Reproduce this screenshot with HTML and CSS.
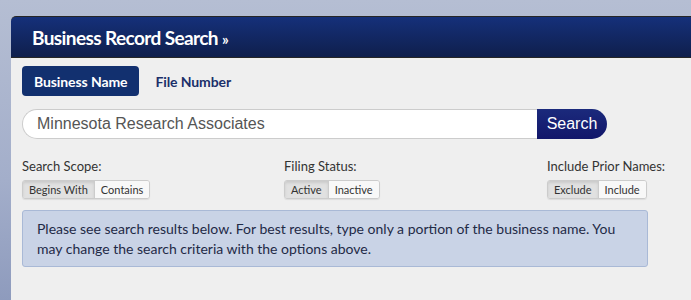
FILE: index.html
```html
<!DOCTYPE html>
<html lang="en">
<head>
  <meta charset="UTF-8">
  <title>Business Record Search</title>
  <link rel="stylesheet" href="styles.css">
</head>
<body>
  <div class="panel">
    <div class="panel-header">
      <h1 class="panel-title">Business Record Search <span class="raquo">&raquo;</span></h1>
    </div>
    <div class="panel-body">
      <div class="tabs">
        <a class="tab active">Business Name</a>
        <a class="tab">File Number</a>
      </div>

      <div class="search-row">
        <input class="search-input" type="text" value="Minnesota Research Associates">
        <button class="search-btn">Search</button>
      </div>

      <div class="options">
        <div class="option">
          <div class="option-label">Search Scope:</div>
          <div class="btn-group">
            <span class="toggle on">Begins With</span><span class="toggle">Contains</span>
          </div>
        </div>
        <div class="option">
          <div class="option-label">Filing Status:</div>
          <div class="btn-group">
            <span class="toggle on">Active</span><span class="toggle">Inactive</span>
          </div>
        </div>
        <div class="option">
          <div class="option-label">Include Prior Names:</div>
          <div class="btn-group">
            <span class="toggle on">Exclude</span><span class="toggle">Include</span>
          </div>
        </div>
      </div>

      <div class="alert">
        Please see search results below. For best results, type only a portion of the business name. You may change the search criteria with the options above.
      </div>
    </div>
  </div>
</body>
</html>
```

FILE: styles.css
```css
* {
  margin: 0;
  padding: 0;
  box-sizing: border-box;
}

body {
  font-family: 'Lato', 'Liberation Sans', sans-serif;
  background: linear-gradient(180deg, #b5bed3 0%, #a3aeca 60%, #8e9bbd 100%);
  height: 300px;
  overflow: hidden;
  padding: 16px 0 0 11px;
}

.panel {
  width: 680px;
  height: 284px;
  background: #efefef;
  border-top-left-radius: 5px;
}

.panel-header {
  background: linear-gradient(180deg, #15307a 0%, #0f1f4c 100%);
  border-top: 1px solid #262626;
  border-bottom: 1px solid #262626;
  border-top-left-radius: 5px;
  height: 42px;
  padding: 0 21px;
  display: flex;
  align-items: center;
}

.panel-title {
  color: #ffffff;
  font-size: 19px;
  font-weight: 700;
  letter-spacing: -0.6px;
  padding-top: 1px;
}

.raquo {
  font-size: 15px;
}

.panel-body {
  padding: 8px 11px;
}

.tabs {
  display: flex;
  align-items: center;
  gap: 16px;
}

.tab {
  display: inline-flex;
  align-items: center;
  height: 30px;
  padding: 0 12px;
  font-size: 14px;
  font-weight: 700;
  letter-spacing: -0.1px;
  color: #1b2f6a;
  border-radius: 4px;
}

.tab.active {
  background: #12306f;
  color: #ffffff;
}

.tab + .tab {
  padding-left: 0;
}

.search-row {
  display: flex;
  margin-top: 13px;
  width: 585px;
}

.search-input {
  flex: 1;
  height: 30px;
  border: 1px solid #cccccc;
  border-right: none;
  border-radius: 15px 0 0 15px;
  padding: 0 14px;
  font-family: 'Liberation Sans', Arial, sans-serif;
  font-size: 16px;
  color: #555555;
  background: #ffffff;
  outline: none;
}

.search-btn {
  width: 70px;
  height: 30px;
  border: none;
  border-radius: 0 15px 15px 0;
  background: linear-gradient(180deg, #1b2a7c 0%, #12166a 100%);
  color: #ffffff;
  font-family: 'Liberation Sans', Arial, sans-serif;
  font-size: 16px;
}

.options {
  display: grid;
  grid-template-columns: 262px 263px 1fr;
  margin-top: 18px;
}

.option-label {
  font-size: 13px;
  color: #333333;
  line-height: 18px;
  white-space: nowrap;
}

.btn-group {
  display: inline-flex;
  margin-top: 5px;
  border: 1px solid #cccccc;
  border-radius: 3px;
  box-shadow: 0 1px 1px rgba(0, 0, 0, 0.08);
  overflow: hidden;
}

.toggle {
  font-size: 11px;
  color: #333333;
  line-height: 17px;
  padding: 0 6px;
  background: #f8f8f8;
}

.toggle + .toggle {
  border-left: 1px solid #cccccc;
}

.toggle.on {
  background: #e1e1e1;
  box-shadow: inset 0 2px 3px rgba(0, 0, 0, 0.1);
}

.alert {
  margin-top: 11px;
  width: 626px;
  background: #c9d3e6;
  border: 1px solid #a9b9d6;
  border-radius: 3px;
  padding: 8px 14px 7px;
  font-size: 14px;
  line-height: 20px;
  color: #1f2a46;
}
```
